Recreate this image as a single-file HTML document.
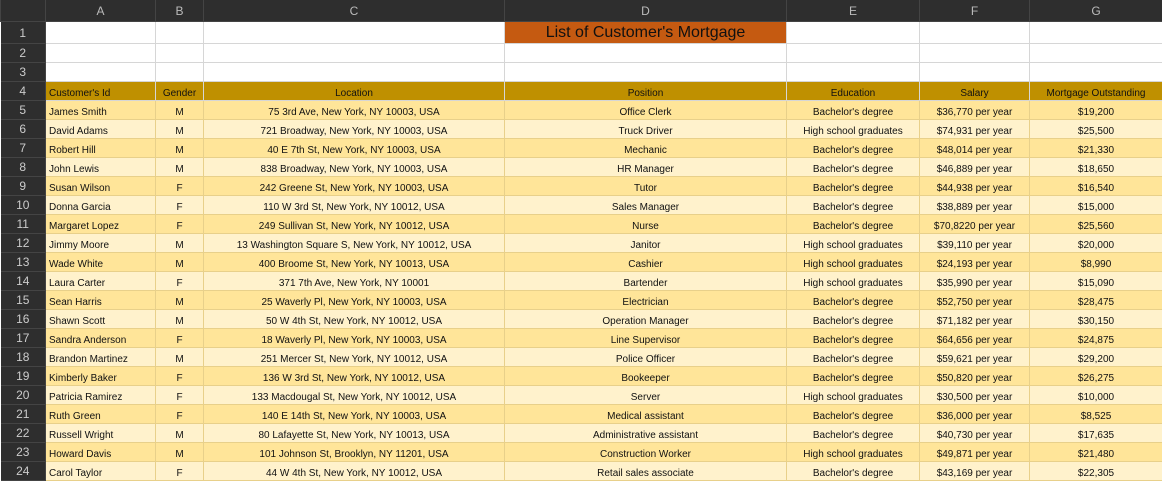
<!DOCTYPE html>
<html><head><style>
body{margin:0;background:#fff;width:1162px;height:482px;overflow:hidden;font-family:"Liberation Sans",Arial,sans-serif;}
table{border-collapse:collapse;table-layout:fixed;width:1162px;}
td{padding:0 3px;font-size:10px;color:#111;white-space:nowrap;overflow:hidden;vertical-align:bottom;border:1px solid #d6d6d6;height:18px;line-height:12px;}
tr.h td{background:#2e2e2e;color:#bbb;font-size:12px;text-align:center;vertical-align:middle;height:21px;border:1px solid #444;border-top:none;}
td.n{background:#2e2e2e;color:#ccc;font-size:12px;text-align:center;vertical-align:middle;border:1px solid #444;border-left:none;}
.c{text-align:center}
tr.r4 td:not(.n){background:#bf9000;}
tr.o td:not(.n){background:#ffe599;border-color:#e8d08a;}
tr.e td:not(.n){background:#fff2cc;border-color:#e8d08a;}
td.t{background:#c55a11 !important;font-size:16px;text-align:center;vertical-align:middle;color:#111;}
</style></head><body>
<table>
<colgroup><col style="width:45px"><col style="width:110px"><col style="width:48px"><col style="width:301px"><col style="width:282px"><col style="width:133px"><col style="width:110px"><col style="width:133px"></colgroup>
<tr class="h"><td></td><td>A</td><td>B</td><td>C</td><td>D</td><td>E</td><td>F</td><td>G</td></tr>
<tr><td class="n" style="height:21px">1</td><td></td><td></td><td></td><td class="t">List of Customer's Mortgage</td><td></td><td></td><td></td></tr>
<tr><td class="n">2</td><td></td><td></td><td></td><td></td><td></td><td></td><td></td></tr>
<tr><td class="n">3</td><td></td><td></td><td></td><td></td><td></td><td></td><td></td></tr>
<tr class="r4"><td class="n">4</td><td>Customer's Id</td><td class="c">Gender</td><td class="c">Location</td><td class="c">Position</td><td class="c">Education</td><td class="c">Salary</td><td class="c">Mortgage Outstanding</td></tr>
<tr class="o"><td class="n">5</td><td>James Smith</td><td class="c">M</td><td class="c">75 3rd Ave, New York, NY 10003, USA</td><td class="c">Office Clerk</td><td class="c">Bachelor's degree</td><td class="c">$36,770 per year</td><td class="c">$19,200</td></tr>
<tr class="e"><td class="n">6</td><td>David Adams</td><td class="c">M</td><td class="c">721 Broadway, New York, NY 10003, USA</td><td class="c">Truck Driver</td><td class="c">High school graduates</td><td class="c">$74,931 per year</td><td class="c">$25,500</td></tr>
<tr class="o"><td class="n">7</td><td>Robert Hill</td><td class="c">M</td><td class="c">40 E 7th St, New York, NY 10003, USA</td><td class="c">Mechanic</td><td class="c">Bachelor's degree</td><td class="c">$48,014 per year</td><td class="c">$21,330</td></tr>
<tr class="e"><td class="n">8</td><td>John Lewis</td><td class="c">M</td><td class="c">838 Broadway, New York, NY 10003, USA</td><td class="c">HR Manager</td><td class="c">Bachelor's degree</td><td class="c">$46,889 per year</td><td class="c">$18,650</td></tr>
<tr class="o"><td class="n">9</td><td>Susan Wilson</td><td class="c">F</td><td class="c">242 Greene St, New York, NY 10003, USA</td><td class="c">Tutor</td><td class="c">Bachelor's degree</td><td class="c">$44,938 per year</td><td class="c">$16,540</td></tr>
<tr class="e"><td class="n">10</td><td>Donna Garcia</td><td class="c">F</td><td class="c">110 W 3rd St, New York, NY 10012, USA</td><td class="c">Sales Manager</td><td class="c">Bachelor's degree</td><td class="c">$38,889 per year</td><td class="c">$15,000</td></tr>
<tr class="o"><td class="n">11</td><td>Margaret Lopez</td><td class="c">F</td><td class="c">249 Sullivan St, New York, NY 10012, USA</td><td class="c">Nurse</td><td class="c">Bachelor's degree</td><td class="c">$70,8220 per year</td><td class="c">$25,560</td></tr>
<tr class="e"><td class="n">12</td><td>Jimmy Moore</td><td class="c">M</td><td class="c">13 Washington Square S, New York, NY 10012, USA</td><td class="c">Janitor</td><td class="c">High school graduates</td><td class="c">$39,110 per year</td><td class="c">$20,000</td></tr>
<tr class="o"><td class="n">13</td><td>Wade White</td><td class="c">M</td><td class="c">400 Broome St, New York, NY 10013, USA</td><td class="c">Cashier</td><td class="c">High school graduates</td><td class="c">$24,193 per year</td><td class="c">$8,990</td></tr>
<tr class="e"><td class="n">14</td><td>Laura Carter</td><td class="c">F</td><td class="c">371 7th Ave, New York, NY 10001</td><td class="c">Bartender</td><td class="c">High school graduates</td><td class="c">$35,990 per year</td><td class="c">$15,090</td></tr>
<tr class="o"><td class="n">15</td><td>Sean Harris</td><td class="c">M</td><td class="c">25 Waverly Pl, New York, NY 10003, USA</td><td class="c">Electrician</td><td class="c">Bachelor's degree</td><td class="c">$52,750 per year</td><td class="c">$28,475</td></tr>
<tr class="e"><td class="n">16</td><td>Shawn Scott</td><td class="c">M</td><td class="c">50 W 4th St, New York, NY 10012, USA</td><td class="c">Operation Manager</td><td class="c">Bachelor's degree</td><td class="c">$71,182 per year</td><td class="c">$30,150</td></tr>
<tr class="o"><td class="n">17</td><td>Sandra Anderson</td><td class="c">F</td><td class="c">18 Waverly Pl, New York, NY 10003, USA</td><td class="c">Line Supervisor</td><td class="c">Bachelor's degree</td><td class="c">$64,656 per year</td><td class="c">$24,875</td></tr>
<tr class="e"><td class="n">18</td><td>Brandon Martinez</td><td class="c">M</td><td class="c">251 Mercer St, New York, NY 10012, USA</td><td class="c">Police Officer</td><td class="c">Bachelor's degree</td><td class="c">$59,621 per year</td><td class="c">$29,200</td></tr>
<tr class="o"><td class="n">19</td><td>Kimberly Baker</td><td class="c">F</td><td class="c">136 W 3rd St, New York, NY 10012, USA</td><td class="c">Bookeeper</td><td class="c">Bachelor's degree</td><td class="c">$50,820 per year</td><td class="c">$26,275</td></tr>
<tr class="e"><td class="n">20</td><td>Patricia Ramirez</td><td class="c">F</td><td class="c">133 Macdougal St, New York, NY 10012, USA</td><td class="c">Server</td><td class="c">High school graduates</td><td class="c">$30,500 per year</td><td class="c">$10,000</td></tr>
<tr class="o"><td class="n">21</td><td>Ruth Green</td><td class="c">F</td><td class="c">140 E 14th St, New York, NY 10003, USA</td><td class="c">Medical assistant</td><td class="c">Bachelor's degree</td><td class="c">$36,000 per year</td><td class="c">$8,525</td></tr>
<tr class="e"><td class="n">22</td><td>Russell Wright</td><td class="c">M</td><td class="c">80 Lafayette St, New York, NY 10013, USA</td><td class="c">Administrative assistant</td><td class="c">Bachelor's degree</td><td class="c">$40,730 per year</td><td class="c">$17,635</td></tr>
<tr class="o"><td class="n">23</td><td>Howard Davis</td><td class="c">M</td><td class="c">101 Johnson St, Brooklyn, NY 11201, USA</td><td class="c">Construction Worker</td><td class="c">High school graduates</td><td class="c">$49,871 per year</td><td class="c">$21,480</td></tr>
<tr class="e"><td class="n">24</td><td>Carol Taylor</td><td class="c">F</td><td class="c">44 W 4th St, New York, NY 10012, USA</td><td class="c">Retail sales associate</td><td class="c">Bachelor's degree</td><td class="c">$43,169 per year</td><td class="c">$22,305</td></tr>
</table>
</body></html>
